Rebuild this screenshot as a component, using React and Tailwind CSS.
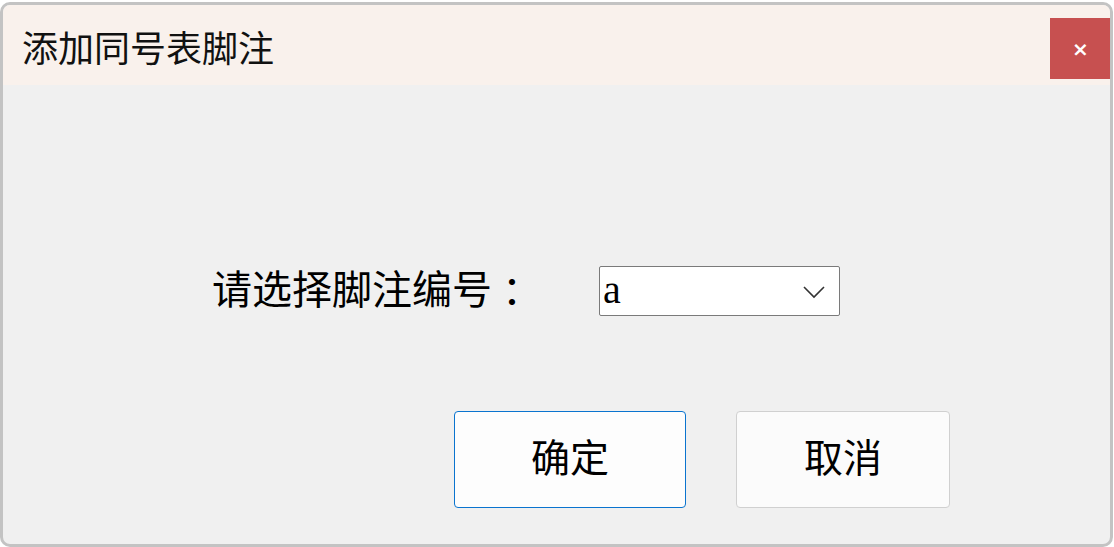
export default function App() {
  return (
    <div className="w-[1114px] h-[547px] bg-white overflow-hidden pt-[2px]">
      {/* dialog window */}
      <div className="h-[545px] w-[1113px] border-[3px] border-[#c3c3c3] rounded-[10px] bg-[#f0f0f0] overflow-hidden flex flex-col">
        {/* title bar */}
        <div className="h-[80px] bg-[#f9f1ec] flex items-start justify-between shrink-0">
          <h1
            className="pl-[19px] pt-[21px] text-[36px] leading-[40px] text-[#111]"
            style={{ fontFamily: '"Noto Sans CJK SC", sans-serif' }}
          >
            添加同号表脚注
          </h1>
          <button className="mt-[13px] mr-[-1px] w-[61px] h-[61px] bg-[#c75050] flex items-center justify-center">
            <span
              className="text-white text-[20px] font-bold leading-none"
              style={{ fontFamily: '"DejaVu Sans", sans-serif' }}
            >
              ×
            </span>
          </button>
        </div>

        {/* body */}
        <div
          className="flex-1 flex flex-col"
          style={{ fontFamily: '"Liberation Serif", "Noto Sans CJK SC", serif' }}
        >
          <div className="flex items-center pl-[209px] pt-[181px]">
            <label className="w-[387px] text-[40px] leading-[50px] text-black">
              请选择脚注编号<span className="ml-[10px]">：</span>
            </label>
            <div className="w-[241px] h-[50px] bg-white border border-[#7a7a7a] rounded-[2px] flex items-center justify-between pl-[3px] pr-[14px]">
              <span className="text-[40px] leading-none text-black pb-[2px]">a</span>
              <svg width="22" height="13" viewBox="0 0 22 13" className="mt-[2px]">
                <polyline
                  points="1,1 11,11 21,1"
                  fill="none"
                  stroke="#333"
                  strokeWidth="1.6"
                />
              </svg>
            </div>
          </div>

          <div className="flex pl-[451px] pt-[95px] gap-[50px]">
            <button className="w-[232px] h-[97px] bg-[#fdfdfd] border border-[#0a74cf] rounded-[4px] text-[39px] text-black">
              确定
            </button>
            <button className="w-[214px] h-[97px] bg-[#fbfbfb] border border-[#d0d0d0] rounded-[4px] text-[39px] text-black">
              取消
            </button>
          </div>
        </div>
      </div>
    </div>
  );
}
